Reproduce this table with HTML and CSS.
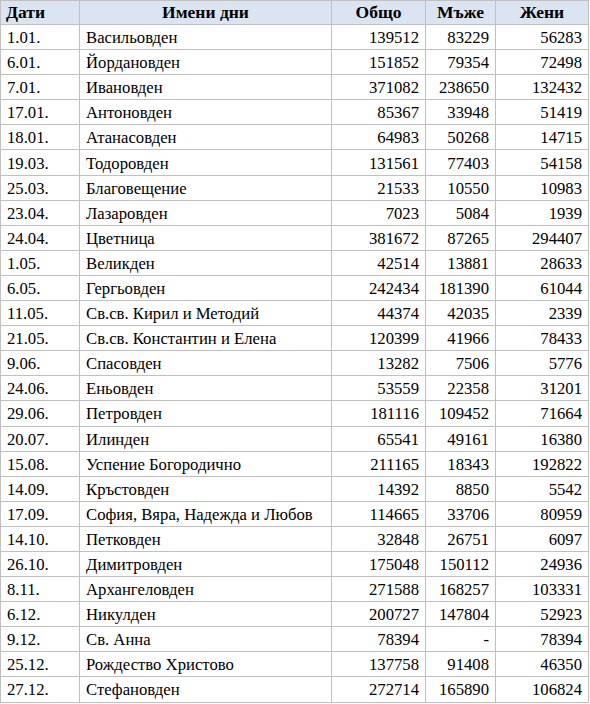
FILE: index.html
```html
<!DOCTYPE html>
<html>
<head>
<meta charset="utf-8">
<link rel="stylesheet" href="styles.css">
</head>
<body>
<table class="data">
<colgroup>
<col class="c-date"><col class="c-name"><col class="c-num1"><col class="c-num2"><col class="c-num3">
</colgroup>
<thead>
<tr><th class="left">Дати</th><th>Имени дни</th><th>Общо</th><th>Мъже</th><th>Жени</th></tr>
</thead>
<tbody>
<tr><td>1.01.</td><td>Васильовден</td><td class="n">139512</td><td class="n">83229</td><td class="n">56283</td></tr>
<tr><td>6.01.</td><td>Йордановден</td><td class="n">151852</td><td class="n">79354</td><td class="n">72498</td></tr>
<tr><td>7.01.</td><td>Ивановден</td><td class="n">371082</td><td class="n">238650</td><td class="n">132432</td></tr>
<tr><td>17.01.</td><td>Антоновден</td><td class="n">85367</td><td class="n">33948</td><td class="n">51419</td></tr>
<tr><td>18.01.</td><td>Атанасовден</td><td class="n">64983</td><td class="n">50268</td><td class="n">14715</td></tr>
<tr><td>19.03.</td><td>Тодоровден</td><td class="n">131561</td><td class="n">77403</td><td class="n">54158</td></tr>
<tr><td>25.03.</td><td>Благовещение</td><td class="n">21533</td><td class="n">10550</td><td class="n">10983</td></tr>
<tr><td>23.04.</td><td>Лазаровден</td><td class="n">7023</td><td class="n">5084</td><td class="n">1939</td></tr>
<tr><td>24.04.</td><td>Цветница</td><td class="n">381672</td><td class="n">87265</td><td class="n">294407</td></tr>
<tr><td>1.05.</td><td>Великден</td><td class="n">42514</td><td class="n">13881</td><td class="n">28633</td></tr>
<tr><td>6.05.</td><td>Гергьовден</td><td class="n">242434</td><td class="n">181390</td><td class="n">61044</td></tr>
<tr><td>11.05.</td><td>Св.св. Кирил и Методий</td><td class="n">44374</td><td class="n">42035</td><td class="n">2339</td></tr>
<tr><td>21.05.</td><td>Св.св. Константин и Елена</td><td class="n">120399</td><td class="n">41966</td><td class="n">78433</td></tr>
<tr><td>9.06.</td><td>Спасовден</td><td class="n">13282</td><td class="n">7506</td><td class="n">5776</td></tr>
<tr><td>24.06.</td><td>Еньовден</td><td class="n">53559</td><td class="n">22358</td><td class="n">31201</td></tr>
<tr><td>29.06.</td><td>Петровден</td><td class="n">181116</td><td class="n">109452</td><td class="n">71664</td></tr>
<tr><td>20.07.</td><td>Илинден</td><td class="n">65541</td><td class="n">49161</td><td class="n">16380</td></tr>
<tr><td>15.08.</td><td>Успение Богородично</td><td class="n">211165</td><td class="n">18343</td><td class="n">192822</td></tr>
<tr><td>14.09.</td><td>Кръстовден</td><td class="n">14392</td><td class="n">8850</td><td class="n">5542</td></tr>
<tr><td>17.09.</td><td>София, Вяра, Надежда и Любов</td><td class="n">114665</td><td class="n">33706</td><td class="n">80959</td></tr>
<tr><td>14.10.</td><td>Петковден</td><td class="n">32848</td><td class="n">26751</td><td class="n">6097</td></tr>
<tr><td>26.10.</td><td>Димитровден</td><td class="n">175048</td><td class="n">150112</td><td class="n">24936</td></tr>
<tr><td>8.11.</td><td>Архангеловден</td><td class="n">271588</td><td class="n">168257</td><td class="n">103331</td></tr>
<tr><td>6.12.</td><td>Никулден</td><td class="n">200727</td><td class="n">147804</td><td class="n">52923</td></tr>
<tr><td>9.12.</td><td>Св. Анна</td><td class="n">78394</td><td class="n">-</td><td class="n">78394</td></tr>
<tr><td>25.12.</td><td>Рождество Христово</td><td class="n">137758</td><td class="n">91408</td><td class="n">46350</td></tr>
<tr><td>27.12.</td><td>Стефановден</td><td class="n">272714</td><td class="n">165890</td><td class="n">106824</td></tr>
</tbody>
</table>
</body>
</html>
```
FILE: styles.css
```css
html, body {
  margin: 0;
  padding: 0;
  background: #ffffff;
}
.data {
  border-collapse: collapse;
  table-layout: fixed;
  width: 588px;
  font-family: "Liberation Serif", "Times New Roman", serif;
  font-size: 16.7px;
  color: #000000;
}
.c-date { width: 79px; }
.c-name { width: 252px; }
.c-num1 { width: 94px; }
.c-num2 { width: 70px; }
.c-num3 { width: 93px; }
.data th, .data td {
  border: 1px solid #c0c0c0;
  padding: 0 6px;
  white-space: nowrap;
  overflow: hidden;
}
.data td {
  padding-top: 2px;
  height: 22.1px;
  line-height: 22px;
}
.data th {
  background: #dbe5f1;
  font-weight: bold;
  font-size: 17.5px;
  text-align: center;
  height: 23px;
  line-height: 23px;
}
.data th.left { text-align: left; padding-left: 5px; }
.data td.n { text-align: right; padding-right: 6px; }
```
